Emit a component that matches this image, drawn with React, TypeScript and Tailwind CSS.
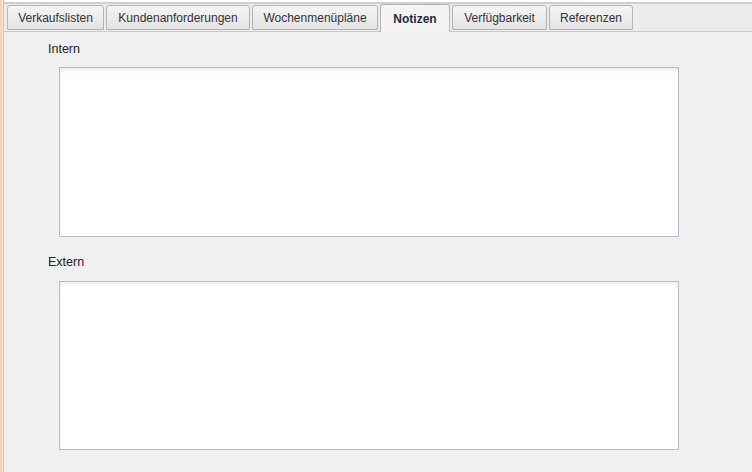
const tabs = [
  { label: "Verkaufslisten", w: "w-[97px]" },
  { label: "Kundenanforderungen", w: "w-[144px]" },
  { label: "Wochenmenüpläne", w: "w-[126px]" },
  { label: "Notizen", w: "w-[70px]", active: true },
  { label: "Verfügbarkeit", w: "w-[95px]" },
  { label: "Referenzen", w: "w-[84px]" },
];

function NoteBox({ h }: { h: string }) {
  return (
    <textarea
      className={`block w-[620px] ${h} resize-none border border-[#b6b8cc] bg-white shadow-[inset_0_4px_5px_-2px_rgba(120,140,130,0.18)] outline-none`}
    />
  );
}

export default function App() {
  return (
    <div
      className="w-[752px] h-[472px] overflow-hidden flex bg-[#f0f0f0] text-[12px] text-[#222]"
      style={{ fontFamily: '"Liberation Sans", Arial, sans-serif' }}
    >
      {/* left edge of neighbouring panel */}
      <div className="w-[2px] bg-[#fad3b4]" />
      <div className="w-[1px] bg-[#fbe6d6]" />
      <div className="w-[1px] bg-[#c6c6c6]" />

      <div className="flex-1 flex flex-col">
        {/* cut-off table row above */}
        <div className="h-[2px] bg-white" />
        <div className="h-[2px] bg-[#cfcfcf]" />

        {/* tab bar */}
        <div className="h-[28px] flex items-end gap-[2px] pl-[3px] bg-[#ececec] border-b border-[#cacaca]">
          {tabs.map((t) =>
            t.active ? (
              <div
                key={t.label}
                className={`${t.w} h-[28px] -mb-[1px] flex items-center justify-center rounded-t-[3px] border border-b-0 border-[#b4b4b4] bg-[#f4f4f4] font-bold text-[#2a2a3a]`}
              >
                {t.label}
              </div>
            ) : (
              <div
                key={t.label}
                className={`${t.w} h-[25px] mb-[1px] flex items-center justify-center rounded-t-[3px] border border-[#b4b4b4] bg-gradient-to-b from-[#f5f5f5] to-[#e3e3e3] text-[#333]`}
              >
                {t.label}
              </div>
            )
          )}
        </div>

        {/* notes */}
        <div className="flex flex-col pl-[44px] pt-[8px]">
          <div className="h-[18px] leading-[18px] text-[12.5px]">Intern</div>
          <div className="pl-[11px] pt-[9px]">
            <NoteBox h="h-[170px]" />
          </div>
          <div className="h-[18px] leading-[18px] mt-[16px] text-[12.5px]">Extern</div>
          <div className="pl-[11px] pt-[10px]">
            <NoteBox h="h-[169px]" />
          </div>
        </div>
      </div>
    </div>
  );
}
